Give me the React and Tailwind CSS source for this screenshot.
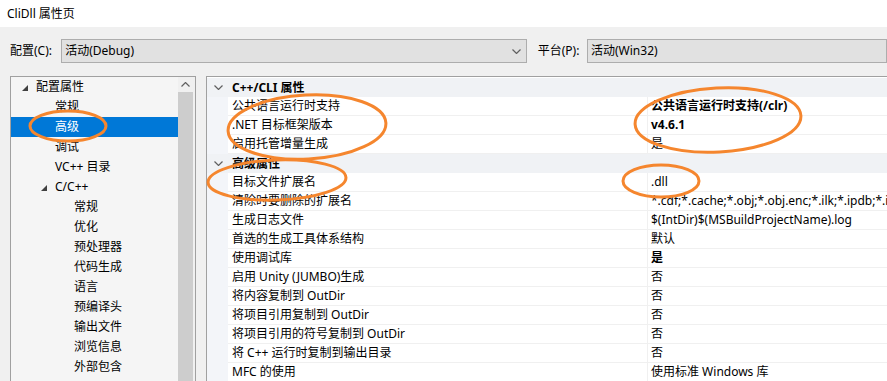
import React from "react";

const font = { fontFamily: '"Noto Sans", "Noto Sans CJK SC", sans-serif' };

const tree = [
  { label: "配置属性", level: 0, expanded: true },
  { label: "常规", level: 1 },
  { label: "高级", level: 1, selected: true },
  { label: "调试", level: 1 },
  { label: "VC++ 目录", level: 1 },
  { label: "C/C++", level: 1, expanded: true },
  { label: "常规", level: 2 },
  { label: "优化", level: 2 },
  { label: "预处理器", level: 2 },
  { label: "代码生成", level: 2 },
  { label: "语言", level: 2 },
  { label: "预编译头", level: 2 },
  { label: "输出文件", level: 2 },
  { label: "浏览信息", level: 2 },
  { label: "外部包含", level: 2 },
];

const props = [
  { cat: "C++/CLI 属性" },
  { name: "公共语言运行时支持", value: "公共语言运行时支持(/clr)", bold: true },
  { name: ".NET 目标框架版本", value: "v4.6.1", bold: true },
  { name: "启用托管增量生成", value: "是" },
  { cat: "高级属性" },
  { name: "目标文件扩展名", value: ".dll" },
  {
    name: "清除时要删除的扩展名",
    value:
      "*.cdf;*.cache;*.obj;*.obj.enc;*.ilk;*.ipdb;*.iobj;*.resources;*.tlb;*.tli;*.tlh;*.tmp;*.rsp",
  },
  { name: "生成日志文件", value: "$(IntDir)$(MSBuildProjectName).log" },
  { name: "首选的生成工具体系结构", value: "默认" },
  { name: "使用调试库", value: "是", bold: true },
  { name: "启用 Unity (JUMBO)生成", value: "否" },
  { name: "将内容复制到 OutDir", value: "否" },
  { name: "将项目引用复制到 OutDir", value: "否" },
  { name: "将项目引用的符号复制到 OutDir", value: "否" },
  { name: "将 C++ 运行时复制到输出目录", value: "否" },
  { name: "MFC 的使用", value: "使用标准 Windows 库" },
];

const indent = ["pl-[10px]", "pl-[29px]", "pl-[48px]"];

function Chevron({ up }) {
  return (
    <svg width="9" height="5" viewBox="0 0 9 5" className="shrink-0">
      <polyline
        points={up ? "0.5,4.5 4.5,0.5 8.5,4.5" : "0.5,0.5 4.5,4.5 8.5,0.5"}
        fill="none"
        stroke="#606060"
        strokeWidth="1.2"
      />
    </svg>
  );
}

function TreeRow({ item }) {
  return (
    <div
      className={`h-[20px] flex items-center ${indent[item.level]} ${
        item.selected ? "bg-[#0078d7] text-white" : "text-black"
      }`}
    >
      <div className="w-[15px] h-full flex items-center">
        {item.expanded && (
          <svg width="7" height="6" viewBox="0 0 7 6" className="ml-px mt-px">
            <polygon points="6,0 6,6 0,6" fill="#404040" />
          </svg>
        )}
      </div>
      <span className="whitespace-nowrap">{item.label}</span>
    </div>
  );
}

function PropRow({ row }) {
  if (row.cat) {
    return (
      <div className="h-[19px] flex items-center bg-[#f0f2f5]">
        <div className="w-[21px] flex justify-center pl-[1px]">
          <Chevron />
        </div>
        <span className="pl-[4px] font-bold whitespace-nowrap">{row.cat}</span>
      </div>
    );
  }
  return (
    <div className="h-[19px] grid grid-cols-[21px_420px_1fr]">
      <div className="bg-[#f3f5f9]" />
      <div className="border-b border-r border-[#f0f0f0] bg-white pl-[4px] flex items-center whitespace-nowrap">
        {row.name}
      </div>
      <div
        className={`border-b border-[#f0f0f0] bg-white pl-[3px] flex items-center whitespace-nowrap overflow-hidden ${
          row.bold ? "font-bold" : ""
        }`}
      >
        {row.value}
      </div>
    </div>
  );
}

export default function App() {
  return (
    <div
      className="relative w-[887px] h-[381px] overflow-hidden flex flex-col text-[12px] leading-[16px] text-black bg-[#f0f0f0]"
      style={font}
    >
      {/* title bar */}
      <div className="h-[27px] bg-white flex items-center pl-[7px] shrink-0">
        CliDll 属性页
      </div>

      {/* configuration / platform */}
      <div className="mt-[12px] h-[24px] flex items-center shrink-0 pl-[10px]">
        <span className="w-[55px] whitespace-nowrap">配置(C):</span>
        <div className="w-[500px] h-[24px] border border-[#adadad] bg-[#e1e1e1] flex items-center justify-between pl-[3px] pr-[5px]">
          <span>活动(Debug)</span>
          <Chevron />
        </div>
        <span className="ml-[11px] w-[53px] whitespace-nowrap">平台(P):</span>
        <div className="w-[300px] h-[24px] border border-[#adadad] bg-[#e1e1e1] flex items-center pl-[3px] shrink-0">
          <span>活动(Win32)</span>
        </div>
      </div>

      {/* panels */}
      <div className="mt-[13px] flex flex-1 min-h-0 pl-[10px]">
        <div className="w-[186px] border-l border-t border-r border-[#a0a0a0] bg-[#f5f5f5] flex">
          <div className="flex-1">
            {tree.map((item, i) => (
              <TreeRow key={i} item={item} />
            ))}
          </div>
          <div className="w-[17px] bg-[#f0f0f0] flex flex-col">
            <div className="h-[15px] w-[15px] flex items-center justify-center">
              <Chevron up />
            </div>
            <div className="w-[15px] flex-1 bg-[#cdcdcd]" />
          </div>
        </div>

        <div className="ml-[10px] flex-1 border-l border-t border-[#a0a0a0] bg-white pt-px">
          {props.map((row, i) => (
            <PropRow key={i} row={row} />
          ))}
        </div>
      </div>

      {/* orange annotation marks */}
      <svg
        className="absolute inset-0 pointer-events-none"
        width="887"
        height="381"
        viewBox="0 0 887 381"
      >
        <g fill="none" stroke="#f5862e" strokeWidth="3">
          <ellipse cx="68" cy="126" rx="38" ry="15" />
          <ellipse cx="307" cy="127" rx="79" ry="32" transform="rotate(-3 307 127)" />
          <ellipse cx="277" cy="180" rx="69" ry="20" transform="rotate(-2 277 180)" />
          <ellipse cx="718" cy="120" rx="83" ry="32" transform="rotate(-3 718 120)" />
          <ellipse cx="661" cy="181" rx="38" ry="16" />
        </g>
      </svg>
    </div>
  );
}
